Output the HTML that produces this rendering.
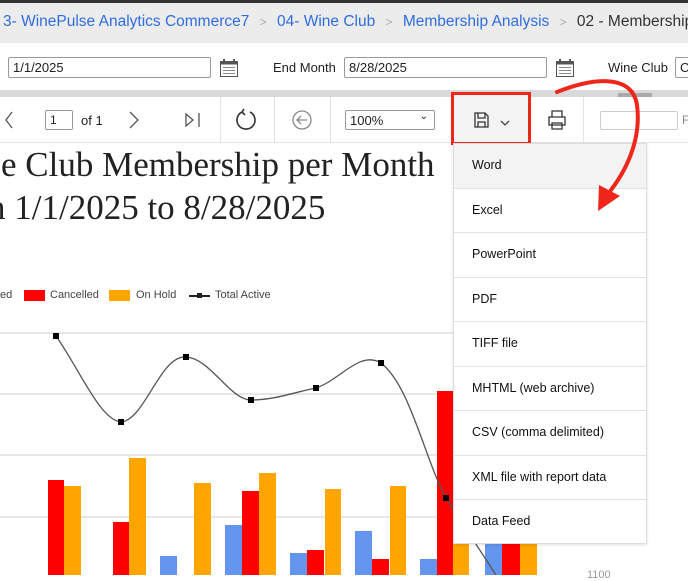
<!DOCTYPE html>
<html><head><meta charset="utf-8"><style>
*{margin:0;padding:0;box-sizing:border-box}
body{width:688px;height:575px;overflow:hidden;position:relative;background:#fff;font-family:"Liberation Sans",Arial,sans-serif;color:#222}
.a{position:absolute}
.inp{position:absolute;border:1px solid #999;border-radius:2px;background:#fff;font-size:13px;padding:2px 4px;height:21px}
.bc{font-size:15.5px;color:#2f6de0;white-space:nowrap}
.sep{position:absolute;top:97px;width:1px;height:46px;background:#e3e3e3}
.dd{position:absolute;left:453px;top:143px;width:194px;height:401px;background:#fff;border:1px solid #ddd;box-shadow:0 1px 3px rgba(0,0,0,.12)}
.dd div{height:44.5px;line-height:43px;padding-left:18px;font-size:12.5px;border-bottom:1px solid #e3e3e3;color:#111}
.leg{font-size:11px;color:#444;top:289px}
</style></head><body>
<div class="a" style="left:0;top:0;width:688px;height:3px;background:#333"></div>
<div class="a" style="left:0;top:3px;width:688px;height:40px;background:#ececec"></div>
<div class="a bc" style="left:3px;top:13px">3- WinePulse Analytics Commerce7 <span style="color:#aaa;font-size:12px;padding:0 6px">&gt;</span> 04- Wine Club <span style="color:#aaa;font-size:12px;padding:0 6px">&gt;</span> Membership Analysis <span style="color:#aaa;font-size:12px;padding:0 6px">&gt;</span> <span style="color:#333">02 - Membership</span></div>

<div class="inp" style="left:8px;top:57px;width:203px">1/1/2025</div>
<svg class="a" style="left:219px;top:58px" width="20" height="20"><rect x="1.5" y="3.5" width="17" height="15" fill="#fff" stroke="#555"/><rect x="1.5" y="3.5" width="17" height="3" fill="#555"/><line x1="5" y1="1" x2="5" y2="5" stroke="#555" stroke-width="2"/><line x1="15" y1="1" x2="15" y2="5" stroke="#555" stroke-width="2"/><g fill="#888"><rect x="4" y="9" width="12" height="1"/><rect x="4" y="12" width="12" height="1"/><rect x="4" y="15" width="12" height="1"/></g></svg>
<div class="a" style="left:273px;top:60px;font-size:13px">End Month</div>
<div class="inp" style="left:344px;top:57px;width:203px">8/28/2025</div>
<svg class="a" style="left:555px;top:58px" width="20" height="20"><rect x="1.5" y="3.5" width="17" height="15" fill="#fff" stroke="#555"/><rect x="1.5" y="3.5" width="17" height="3" fill="#555"/><line x1="5" y1="1" x2="5" y2="5" stroke="#555" stroke-width="2"/><line x1="15" y1="1" x2="15" y2="5" stroke="#555" stroke-width="2"/><g fill="#888"><rect x="4" y="9" width="12" height="1"/><rect x="4" y="12" width="12" height="1"/><rect x="4" y="15" width="12" height="1"/></g></svg>
<div class="a" style="left:608px;top:60px;font-size:13px">Wine Club</div>
<div class="inp" style="left:675px;top:57px;width:30px">C</div>

<div class="a" style="left:0;top:90px;width:688px;height:7px;background:#d9d9d9"></div>
<div class="a" style="left:618px;top:93px;width:34px;height:4px;background:#aaa"></div>
<div class="a" style="left:0;top:97px;width:688px;height:46px;background:#fff;border-bottom:1px solid #e6e6e6"></div>
<svg class="a" style="left:0;top:97px" width="688" height="46" fill="none" stroke="#555" stroke-width="1.3">
<path d="M12 15 L6 23 L12 31"/><path d="M130 15 L138 23 L130 31"/>
<path d="M186 17 L193 23 L186 29 Z M199 16 V30"/>
<path d="M242 15 A9 9 0 1 0 250 15 M244 12 L242 15 L245 18" stroke="#333" stroke-width="1.6"/>
<circle cx="302" cy="23" r="9" stroke="#888"/><path d="M307 23 H297 M301 19 L297 23 L301 27" stroke="#888"/>
<path d="M552 20 V14 H562 V20 M549 20 H565 V28 H549 Z M552 26 H562 V32 H552 Z" stroke="#333"/>
</svg>
<div class="inp" style="left:45px;top:110px;width:28px;height:20px;font-size:12px">1</div>
<div class="a" style="left:81px;top:113px;font-size:13px">of 1</div>
<div class="inp" style="left:345px;top:110px;width:90px;height:20px;font-size:13px">100%<span style="position:absolute;right:6px;top:0;font-size:10px">&#8964;</span></div>
<div class="inp" style="left:600px;top:111px;width:78px;height:19px;border-color:#ccc"></div>
<div class="a" style="left:682px;top:113px;font-size:12px;color:#888">F</div>
<div class="sep" style="left:220px"></div><div class="sep" style="left:274px"></div><div class="sep" style="left:330px"></div><div class="sep" style="left:583px"></div>
<div class="a" style="left:451px;top:92px;width:80px;height:53px;border:3px solid #f0261b;background:#f3f3f3"></div>
<svg class="a" style="left:471px;top:105px" width="40" height="30" fill="none" stroke="#333" stroke-width="1.3"><path d="M4 8 H14 L17 11 V22 H4 Z M7 8 V13 H14 V8 M7 22 V17 H14 V22"/><path d="M30 16 L34 20 L38 16" stroke="#444"/></svg>

<div class="a" style="left:1px;top:145px;font-family:'Liberation Serif',serif;font-size:35px;white-space:nowrap">e Club Membership per Month</div>
<div class="a" style="left:-12px;top:188px;font-family:'Liberation Serif',serif;font-size:35px;white-space:nowrap">n 1/1/2025 to 8/28/2025</div>

<div class="a leg" style="left:0">ed</div>
<div class="a" style="left:24px;top:290px;width:21px;height:11px;background:#f00"></div>
<div class="a leg" style="left:50px">Cancelled</div>
<div class="a" style="left:109px;top:290px;width:21px;height:11px;background:#ffa500"></div>
<div class="a leg" style="left:136px">On Hold</div>
<div class="a" style="left:189px;top:295px;width:21px;height:2px;background:#222"></div>
<div class="a" style="left:197px;top:293px;width:5px;height:5px;background:#222"></div>
<div class="a leg" style="left:215px">Total Active</div>

<svg class="a" style="left:0;top:300px" width="688" height="275">
<g stroke="#e6e6e6" stroke-width="2"><line x1="0" y1="33" x2="453" y2="33"/><line x1="0" y1="94" x2="453" y2="94"/><line x1="0" y1="155" x2="453" y2="155"/><line x1="0" y1="217" x2="453" y2="217"/></g>
<line x1="454" y1="0" x2="454" y2="275" stroke="#e6e6e6"/>
<g transform="translate(0,-300)">
<g fill="#f00"><rect x="48" y="480" width="16" height="95"/><rect x="113" y="522" width="16" height="53"/><rect x="242" y="491" width="17" height="84"/><rect x="307" y="550" width="17" height="25"/><rect x="372" y="559" width="17" height="16"/><rect x="437" y="391" width="16" height="184"/><rect x="502" y="543" width="18" height="32"/></g>
<g fill="#ffa500"><rect x="64" y="486" width="17" height="89"/><rect x="129" y="458" width="17" height="117"/><rect x="194" y="483" width="17" height="92"/><rect x="259" y="473" width="17" height="102"/><rect x="325" y="489" width="16" height="86"/><rect x="390" y="486" width="16" height="89"/><rect x="453" y="544" width="16" height="31"/><rect x="520" y="543" width="17" height="32"/></g>
<g fill="#6495ed"><rect x="160" y="556" width="17" height="19"/><rect x="225" y="525" width="17" height="50"/><rect x="290" y="553" width="17" height="22"/><rect x="355" y="531" width="17" height="44"/><rect x="420" y="559" width="17" height="16"/><rect x="485" y="543" width="17" height="32"/></g>
<path d="M56 336 C80 370 100 420 121 422 C145 420 160 355 186 357 C210 358 230 400 251 400 C275 400 295 392 316 388 C340 380 360 350 381 363 C410 385 425 460 446 498 L496 575" fill="none" stroke="#555" stroke-width="1.3"/>
<g fill="#000"><rect x="53" y="333" width="6" height="6"/><rect x="118" y="419" width="6" height="6"/><rect x="183" y="354" width="6" height="6"/><rect x="248" y="397" width="6" height="6"/><rect x="313" y="385" width="6" height="6"/><rect x="378" y="360" width="6" height="6"/><rect x="443" y="495" width="6" height="6"/></g>
</g>
</svg>
<div class="a" style="left:587px;top:569px;font-size:11px;color:#999">1100</div>

<div class="dd">
<div style="background:#f3f3f3">Word</div><div>Excel</div><div>PowerPoint</div><div>PDF</div><div>TIFF file</div><div>MHTML (web archive)</div><div>CSV (comma delimited)</div><div>XML file with report data</div><div style="border-bottom:none">Data Feed</div>
</div>

<svg class="a" style="left:0;top:0" width="688" height="575">
<path d="M557 92 C590 79 632 72 637 105 C641 135 630 165 611 190" fill="none" stroke="#f0261b" stroke-width="4" stroke-linecap="round"/>
<path d="M598 211 L599 185 L620 196 Z" fill="#f0261b"/>
</svg>
</body></html>
